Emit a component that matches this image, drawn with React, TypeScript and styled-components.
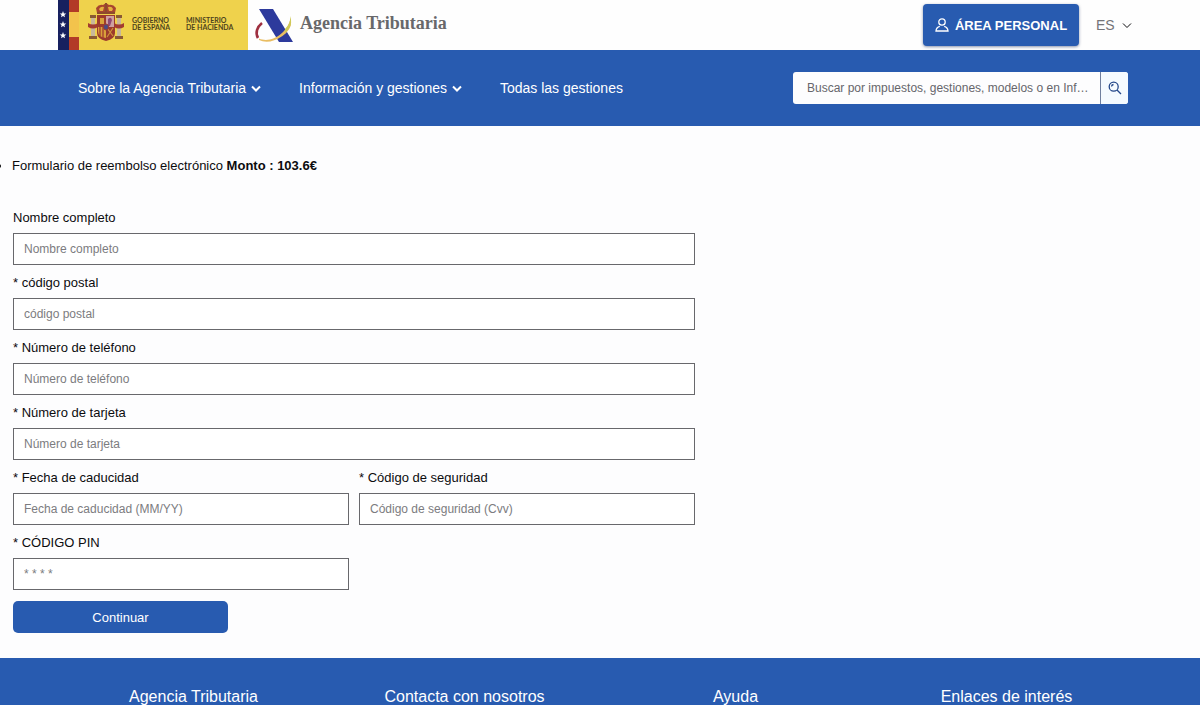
import React from "react";
import styled, { createGlobalStyle } from "styled-components";

const blue = "#285bb0";

const GlobalStyle = createGlobalStyle`
  *, *::before, *::after { box-sizing: border-box; }
  body {
    margin: 0;
    background: #fdfdfe;
    color: #0c0c0e;
    font-family: "Liberation Sans", Arial, sans-serif;
    font-size: 13px;
  }
  button, input, select { font-family: inherit; }
`;

const TopBar = styled.header`
  display: flex;
  align-items: center;
  justify-content: space-between;
  height: 50px;
  padding: 0 68px 0 58px;
  background: #fefefe;
`;

const Brand = styled.a`
  display: flex;
  align-items: center;
  height: 50px;
  color: inherit;
  text-decoration: none;
`;

const Government = styled.span`
  display: flex;
  align-items: center;
  width: 190px;
  height: 50px;
  background: #efd24c;
`;

const FlagStrip = styled.svg`
  flex: none;
  width: 21px;
  height: 50px;
`;

const Arms = styled.svg`
  flex: none;
  width: 38px;
  height: 40px;
  margin: 0 7px 4px 8px;
`;

const Ministry = styled.span<{ $width: number }>`
  width: ${(p) => p.$width}px;
  padding-bottom: 2px;
  color: #4d431d;
  font-family: Lato, sans-serif;
  font-size: 7px;
  font-weight: 700;
  line-height: 7px;
  white-space: nowrap;
`;

const AgencyMark = styled.svg`
  width: 42px;
  height: 38px;
  margin: 0 4px 0 6px;
`;

const AgencyName = styled.span`
  padding-bottom: 4px;
  color: #68686a;
  font-family: "Liberation Serif", "Times New Roman", serif;
  font-size: 18px;
  font-weight: 700;
  line-height: 24px;
`;

const Account = styled.div`
  display: flex;
  align-items: center;
  gap: 17px;
`;

const PersonalButton = styled.button`
  display: flex;
  align-items: center;
  justify-content: center;
  gap: 6px;
  width: 156px;
  height: 42px;
  padding: 0;
  border: 0;
  border-radius: 4px;
  background: ${blue};
  box-shadow: 0 1px 3px rgba(20, 40, 90, 0.5);
  color: #fff;
  font-size: 13px;
  font-weight: 700;
  cursor: pointer;
`;

const LanguagePicker = styled.label`
  display: grid;
  align-items: center;
  width: 36px;

  > * { grid-area: 1 / 1; }
  > svg { justify-self: end; pointer-events: none; }
`;

const LanguageSelect = styled.select`
  width: 100%;
  padding: 0;
  border: 0;
  appearance: none;
  background: transparent;
  color: #747478;
  font-size: 14px;
`;

const NavBar = styled.nav`
  display: flex;
  align-items: center;
  justify-content: space-between;
  height: 76px;
  padding: 0 72px 0 78px;
  background: ${blue};
`;

const Menu = styled.div`
  display: flex;
  align-items: center;
  gap: 38px;
`;

const MenuButton = styled.button`
  display: flex;
  align-items: center;
  gap: 5px;
  padding: 0;
  border: 0;
  background: none;
  color: #fff;
  font-size: 14px;
  line-height: 20px;
  cursor: pointer;
`;

const MenuLink = styled.a`
  color: #fff;
  font-size: 14px;
  line-height: 20px;
  text-decoration: none;
`;

const Search = styled.form`
  display: flex;
  width: 335px;
  height: 32px;
  overflow: hidden;
  border-radius: 3px;
  background: #fdfdfe;
`;

const SearchInput = styled.input`
  flex: 1;
  min-width: 0;
  padding: 0 8px 0 14px;
  border: 0;
  background: transparent;
  font-size: 12px;
  text-overflow: ellipsis;

  &::placeholder { color: #66666b; opacity: 1; }
`;

const SearchButton = styled.button`
  display: flex;
  align-items: center;
  justify-content: center;
  width: 28px;
  padding: 0;
  border: 0;
  border-left: 1px solid #6f7f9e;
  background: #f4faff;
  color: #23478a;
`;

const Content = styled.main`
  padding: 29px 13px 25px;
`;

const Summary = styled.ul`
  margin: 0 0 28px -13px;
  padding-left: 12px;
  line-height: 22px;
`;

const RefundForm = styled.form`
  display: grid;
  grid-template-columns: 1fr 1fr;
  gap: 5px 10px;
  max-width: 682px;
`;

const Field = styled.div<{ $wide?: boolean }>`
  display: flex;
  flex-direction: column;
  grid-column: ${(p) => (p.$wide ? "1 / -1" : "auto")};
`;

const FieldLabel = styled.label`
  margin-bottom: 2px;
  font-size: 13px;
  line-height: 26px;
`;

const TextInput = styled.input`
  width: 100%;
  height: 32px;
  padding: 0 10px;
  border: 1px solid #68686c;
  border-radius: 0;
  background: #fff;
  color: #0c0c0e;
  font-size: 12px;

  &::placeholder { color: #7c7c80; opacity: 1; }
`;

const SubmitButton = styled.button`
  grid-column: 1;
  width: 215px;
  height: 32px;
  margin-top: 6px;
  padding: 0;
  border: 0;
  border-radius: 5px;
  background: ${blue};
  color: #fff;
  font-size: 13px;
  cursor: pointer;
`;

const Footer = styled.footer`
  display: grid;
  grid-template-columns: repeat(4, 1fr);
  padding: 29px 58px 0;
  background: ${blue};
`;

const FooterHeading = styled.h2`
  margin: 0;
  color: #fff;
  font-size: 16px;
  font-weight: 400;
  line-height: 19px;
  text-align: center;
`;

function Chevron({ width = 2 }: { width?: number }) {
  return (
    <svg width="10" height="10" viewBox="0 0 10 10" fill="none" stroke="currentColor" strokeWidth={width} aria-hidden="true">
      <path d="M1 3.5 5 7.5 9 3.5" />
    </svg>
  );
}

function Star({ y }: { y: number }) {
  return (
    <path
      transform={`translate(5 ${y})`}
      fill="#fff"
      d="M0-3.4 .9-1.1 3.3-1 1.4.5 2 2.8 0 1.5-2 2.8-1.4.5-3.3-1-.9-1.1Z"
    />
  );
}

function Flags() {
  return (
    <FlagStrip viewBox="0 0 21 50" aria-hidden="true">
      <path fill="#17205f" d="M0 0h11v50H0z" />
      <path fill="#b23a27" d="M11 0h10v50H11z" />
      <path fill="#f3c34c" d="M11 12h10v25H11z" />
      <Star y={14.5} />
      <Star y={24.5} />
      <Star y={35.5} />
    </FlagStrip>
  );
}

function CoatOfArms() {
  return (
    <Arms viewBox="0 0 38 40" aria-hidden="true">
      <path fill="#a8452f" d="M10 10 9 5q3-4 7-3l3-2 3 2q4-1 7 3l-1 5Z" />
      <path fill="#e3b13e" d="M12 6q2-3 5-2l-1 4h-3Zm9-2q4-1 5 2l-1 2h-3Z" />
      <path fill="#8e4a2c" d="M18 0h2v9h-2zM10 9h18v2H10z" />
      <path fill="#c9b79a" d="M4 15h4v18H4zM30 15h4v18h-4z" />
      <path fill="#8a5a33" d="M3 12h6v3H3zM29 12h6v3h-6zM2 33h8v3H2zM28 33h8v3h-8z" />
      <path fill="#a33c30" d="M1 20q5 3 10 0v4q-5 3-10 0Zm26 0q5 3 10 0v4q-5 3-10 0Z" />
      <path fill="#9d3b2c" d="M10 12h18v18q0 6-9 8-9-2-9-8Z" />
      <path fill="#cfa0a0" d="M19 13h8v11h-8z" />
      <path fill="#d9a13a" d="M11 24h8v11q-8-1-8-7Z" />
      <path stroke="#a33c30" strokeWidth="1.3" d="M13 24v9m3-9v11" />
      <path stroke="#cf923b" strokeWidth="1.2" fill="none" d="M20 25l6 8m0-8-6 9" />
      <path fill="#d9a13a" d="M13 15h4v6h-4z" />
      <path fill="#8f4a75" d="M21 16q3-3 4 1l-2 6h-2Z" />
      <ellipse cx="19" cy="24" rx="2.5" ry="3" fill="#484a87" stroke="#9d3b2c" />
    </Arms>
  );
}

function AgencyLogo() {
  return (
    <AgencyMark viewBox="0 0 42 38" aria-hidden="true">
      <path fill="none" stroke="#9e2f3f" strokeWidth="2.6" d="M8 17C3 21 1 27 4 32" />
      <path fill="#2d3a9c" d="M5 3h14l20 33H25Z" />
      <path fill="#e9bd62" d="M5 32.500C17 38 34 27 36.500 12q3 10-8 18Q15 39 5 34Z" />
      <path fill="#ccc957" d="M31 23q6-5 5-13 4 9-5 17Z" />
    </AgencyMark>
  );
}

function PersonIcon() {
  return (
    <svg width="14" height="14" viewBox="0 0 14 14" fill="none" stroke="currentColor" strokeWidth="1.3" aria-hidden="true">
      <circle cx="7" cy="4" r="3.200" />
      <path d="M4.800 8.300C2.500 8.900 1.200 10.200 1 13h12c-.2-2.800-1.500-4.100-3.800-4.700" />
    </svg>
  );
}

function SearchIcon() {
  return (
    <svg width="14" height="14" viewBox="0 0 14 14" fill="none" stroke="currentColor" strokeWidth="1.3" aria-hidden="true">
      <circle cx="5.700" cy="5.700" r="4.500" />
      <path d="m9 9 4 4M3.500 5.500q.2-1.700 2-2" />
    </svg>
  );
}

const fields = [
  { id: "name", label: "Nombre completo", placeholder: "Nombre completo", wide: true },
  { id: "postal", label: "* código postal", placeholder: "código postal", wide: true },
  { id: "phone", label: "* Número de teléfono", placeholder: "Número de teléfono", wide: true },
  { id: "card", label: "* Número de tarjeta", placeholder: "Número de tarjeta", wide: true },
  { id: "expiry", label: "* Fecha de caducidad", placeholder: "Fecha de caducidad (MM/YY)", wide: false },
  { id: "cvv", label: "* Código de seguridad", placeholder: "Código de seguridad (Cvv)", wide: false },
  { id: "pin", label: "* CÓDIGO PIN", placeholder: "* * * *", wide: false },
];

const footerHeadings = ["Agencia Tributaria", "Contacta con nosotros", "Ayuda", "Enlaces de interés"];

export default function App() {
  return (
    <>
      <GlobalStyle />
      <TopBar>
        <Brand href="#">
          <Government>
            <Flags />
            <CoatOfArms />
            <Ministry $width={54}>GOBIERNO<br />DE ESPAÑA</Ministry>
            <Ministry $width={50}>MINISTERIO<br />DE HACIENDA</Ministry>
          </Government>
          <AgencyLogo />
          <AgencyName>Agencia Tributaria</AgencyName>
        </Brand>
        <Account>
          <PersonalButton type="button"><PersonIcon />ÁREA PERSONAL</PersonalButton>
          <LanguagePicker>
            <LanguageSelect aria-label="Idioma" defaultValue="ES">
              <option>ES</option>
            </LanguageSelect>
            <Chevron width={1} />
          </LanguagePicker>
        </Account>
      </TopBar>
      <NavBar>
        <Menu>
          <MenuButton type="button">Sobre la Agencia Tributaria<Chevron /></MenuButton>
          <MenuButton type="button">Información y gestiones<Chevron /></MenuButton>
          <MenuLink href="#">Todas las gestiones</MenuLink>
        </Menu>
        <Search role="search" onSubmit={(e) => e.preventDefault()}>
          <SearchInput type="text" aria-label="Buscar" placeholder="Buscar por impuestos, gestiones, modelos o en Infor..." />
          <SearchButton type="submit" aria-label="Buscar"><SearchIcon /></SearchButton>
        </Search>
      </NavBar>
      <Content>
        <Summary>
          <li>Formulario de reembolso electrónico <b>Monto : 103.6€</b></li>
        </Summary>
        <RefundForm onSubmit={(e) => e.preventDefault()}>
          {fields.map((f) => (
            <Field key={f.id} $wide={f.wide}>
              <FieldLabel htmlFor={f.id}>{f.label}</FieldLabel>
              <TextInput id={f.id} type="text" placeholder={f.placeholder} />
            </Field>
          ))}
          <SubmitButton type="submit">Continuar</SubmitButton>
        </RefundForm>
      </Content>
      <Footer>
        {footerHeadings.map((h) => <FooterHeading key={h}>{h}</FooterHeading>)}
      </Footer>
    </>
  );
}
